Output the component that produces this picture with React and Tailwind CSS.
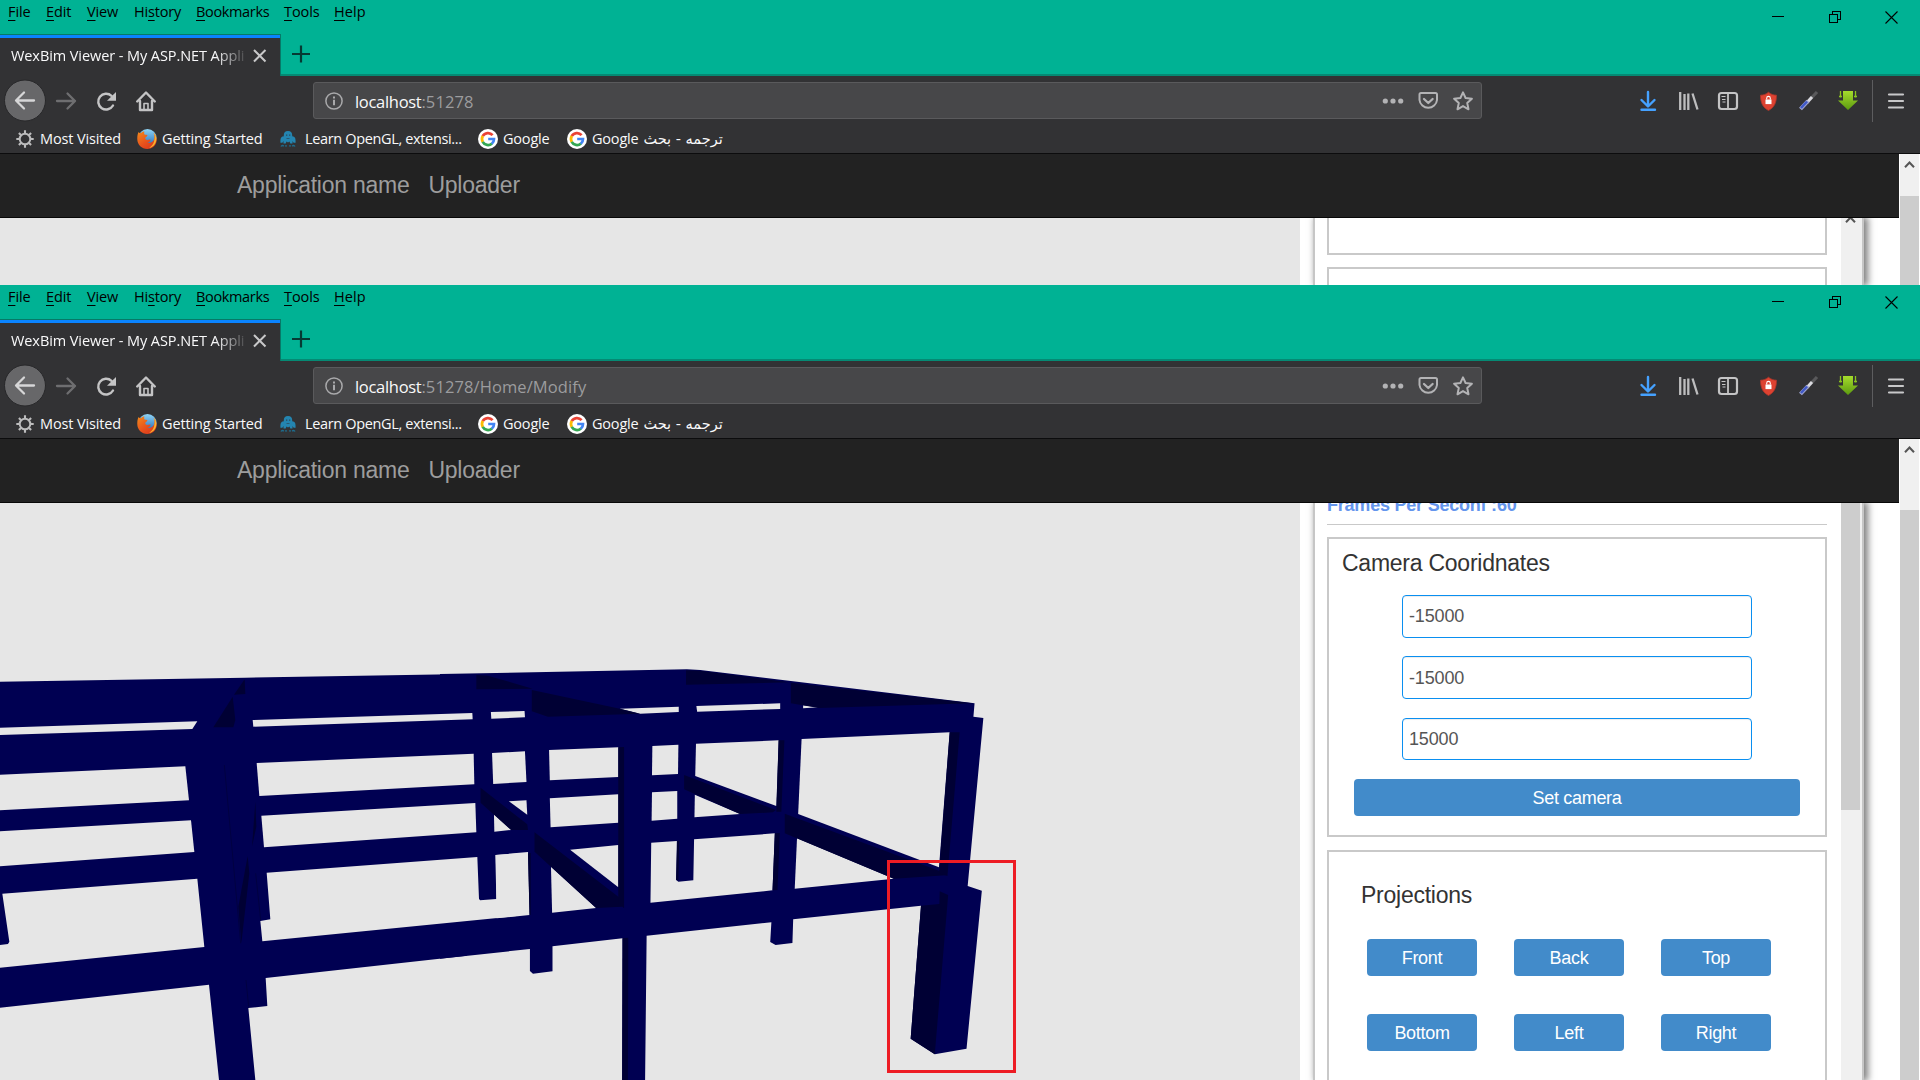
import React from "react";

const UI = "font-['Open_Sans','Noto_Sans',sans-serif]";

function MenuItem({ k, pre = "", rest, className }) {
  return (
    <span className={"block shrink-0 whitespace-nowrap " + className}>
      {pre}
      <span className="underline decoration-1 underline-offset-[3px]">{k}</span>
      {rest}
    </span>
  );
}

function MenuRow() {
  return (
    <div className={"flex h-[34px] items-start justify-between pl-2 text-[#06241f] " + UI}>
      <div className="flex pt-px text-[14.5px] leading-[21px] text-black">
        <MenuItem k="F" rest="ile" className="w-[38px] tracking-[-0.1px]" />
        <MenuItem k="E" rest="dit" className="w-[41px] tracking-[-0.1px]" />
        <MenuItem k="V" rest="iew" className="w-[47px] tracking-[-0.15px]" />
        <MenuItem pre="Hi" k="s" rest="tory" className="w-[62px] tracking-[-0.2px]" />
        <MenuItem k="B" rest="ookmarks" className="w-[88px] tracking-[-0.35px]" />
        <MenuItem k="T" rest="ools" className="w-[50px] tracking-[-0.1px]" />
        <MenuItem k="H" rest="elp" className="w-[36px] tracking-[0.05px]" />
      </div>
      <svg className="h-[34px] w-[160px] shrink-0" viewBox="1760 0 160 34" fill="none" stroke="#000" shapeRendering="crispEdges">
        <path d="M1772 16.5h12" />
        <path d="M1829.5 14.5h8v8h-8zM1832.5 14v-2.500h8v8h-2.500" />
        <path d="M1885.500 11.500l12 12M1897.500 11.500l-12 12" shapeRendering="auto" strokeWidth="1.100" />
      </svg>
    </div>
  );
}

function TabRow() {
  return (
    <div className="flex h-[42px]">
      <div className="flex w-[281px] shrink-0 flex-col border-t border-r border-[#067a68] bg-[#323234]">
        <div className="h-[3px] shrink-0 bg-[#0a84ff]" />
        <div className="flex flex-1 items-center pb-[3px] pl-[11px]">
          <div className="w-[236px] [mask-image:linear-gradient(to_right,#000_204px,transparent_238px)]">
            <span className={"block whitespace-nowrap text-[14.5px] leading-[20px] tracking-[-0.08px] text-[#f9f9fa] " + UI}>
              WexBim Viewer - My ASP.NET Appli
            </span>
          </div>
          <svg className="ml-[5px] h-[16px] w-[16px]" viewBox="0 0 16 16" fill="none" stroke="#c8c8c9" strokeWidth="2">
            <path d="M2 2l11.500 11.500M13.500 2L2 13.500" />
          </svg>
        </div>
      </div>
      <div className="flex flex-1 items-start border-b-2 border-[#058a74] pt-[10px] pl-[10px]">
        <svg className="h-[20px] w-[20px]" viewBox="0 0 20 20" fill="none" stroke="#063a33" strokeWidth="2.200">
          <path d="M1 10h18M10 1.500v17" />
        </svg>
      </div>
    </div>
  );
}

function NavButtons() {
  return (
    <svg className="h-[50px] w-[313px] shrink-0" viewBox="0 76 313 50" fill="none" strokeLinecap="round" strokeLinejoin="round">
      <circle cx="25" cy="100.500" r="20.500" fill="#676769" stroke="#272729" />
      <path d="M34 100.500H16.500M24 92.500l-8 8 8 8" stroke="#d6d6d7" strokeWidth="2.300" />
      <path d="M57 101h18M67.500 93.500l7.500 7.500-7.500 7.500" stroke="#6e6e70" strokeWidth="2.300" />
      <path d="M111.500 95.800A7.900 7.900 0 1 0 113 105.500" stroke="#c4c4c5" strokeWidth="2.400" />
      <path d="M116 92v8.800h-9z" fill="#c4c4c5" />
      <path d="M137.200 101.500l8.800-9 8.800 9M140 101v9h12v-9" stroke="#c4c4c5" strokeWidth="2.400" />
      <path d="M144 110v-6.500h4V110" stroke="#c4c4c5" strokeWidth="1.600" />
    </svg>
  );
}

function UrlBar({ path }) {
  return (
    <div className="mt-[6px] flex h-[37px] w-[1169px] shrink-0 items-center rounded-[3px] border border-[#5a5a5c] bg-[#474749]">
      <svg className="ml-[11px] h-[18px] w-[18px]" viewBox="0 0 18 18" fill="none" stroke="#a9a9ab">
        <circle cx="9" cy="9" r="8.100" strokeWidth="1.500" />
        <path d="M9 7.800v5.400" strokeWidth="2" />
        <path d="M9 4.400v2" strokeWidth="2" />
      </svg>
      <div className={"ml-[12px] flex-1 pt-[2px] whitespace-nowrap text-[16.500px] leading-[22px] tracking-[-0.3px] text-[#f9f9fa] " + UI}>
        localhost<span className="tracking-[0.1px] text-[#9c9c9e]">{path}</span>
      </div>
      <svg className="h-[35px] w-[110px]" viewBox="1371 83 110 35" fill="none" stroke="#b3b3b5" strokeWidth="2" strokeLinejoin="round" strokeLinecap="round">
        <g fill="#b3b3b5" stroke="none">
          <circle cx="1385.300" cy="101" r="2.600" />
          <circle cx="1393" cy="101" r="2.600" />
          <circle cx="1400.700" cy="101" r="2.600" />
        </g>
        <path d="M1421 93h14.500q1.500 0 1.500 1.500v5.500a8.800 8.800 0 0 1-17.500 0v-5.500q0-1.500 1.500-1.500z" />
        <path d="M1424 99l4.300 4 4.300-4" strokeWidth="2.300" />
        <path d="M1463 92.300l2.600 5.700 6.300.7-4.700 4.200 1.300 6.400-5.500-3.200-5.500 3.200 1.300-6.400-4.700-4.200 6.300-.7z" />
      </svg>
    </div>
  );
}

function ToolbarIcons() {
  return (
    <svg className="h-[50px] w-[300px] shrink-0" viewBox="1620 76 300 50" fill="none">
      <defs>
        <linearGradient id="leafGreen" x1="0" y1="0" x2="0" y2="1">
          <stop offset="0" stopColor="#a5dc2c" />
          <stop offset="1" stopColor="#5c9a10" />
        </linearGradient>
      </defs>
      <g stroke="#45a1ff" strokeWidth="2.400" strokeLinecap="round" strokeLinejoin="round">
        <path d="M1648 92v14M1641.500 100l6.500 6.500 6.500-6.500M1641.500 109.800h13.500" />
      </g>
      <path d="M1680.200 92v18M1684.500 94v16M1688.300 93.500v16.500M1692.500 93.500l5 16" stroke="#bdbdbe" strokeWidth="2.300" />
      <rect x="1719" y="93" width="18" height="16" rx="2.500" stroke="#c4c4c5" strokeWidth="2.200" />
      <path d="M1728 93v16" stroke="#c4c4c5" strokeWidth="1.800" />
      <path d="M1721.500 96.500h4M1722 99.500h3.500M1722.500 102h3" stroke="#c4c4c5" strokeWidth="1.200" />
      <path d="M1768.500 92.200c2.400 2 4.600 2.800 8 3 0 7-2 12.300-8 15.300-6-3-8-8.300-8-15.300 3.400-.2 5.600-1 8-3z" fill="#dd4231" stroke="#a93529" strokeWidth=".8" />
      <rect x="1765.500" y="99.500" width="6" height="4.600" fill="#fff" />
      <path d="M1766.700 99.500v-1.300a1.800 1.800 0 0 1 3.600 0v1.300" stroke="#fff" strokeWidth="1.100" />
      <path d="M1817 92l-8 8.500" stroke="#59595b" strokeWidth="3.200" />
      <path d="M1812 97l-5 5.500" stroke="#d9d9df" strokeWidth="3" />
      <path d="M1808 101l-7.500 8" stroke="#9ea4cf" strokeWidth="4" />
      <path d="M1807 101.500l-6 6.500" stroke="#4059c8" strokeWidth="2.500" />
      <path d="M1843 91h10v9.500h5l-10 9.500-10-9.500h5z" fill="url(#leafGreen)" />
      <path d="M1840.500 91v6.500M1855.500 91v6.500M1839 96.500h3M1854 96.500h3" stroke="#8ac41f" strokeWidth="1.300" />
      <path d="M1872.500 80v42" stroke="#5d5d5f" />
      <path d="M1889 94.500h14M1889 101h14M1889 107.500h14" stroke="#c8c8c9" strokeWidth="2.200" strokeLinecap="round" />
    </svg>
  );
}

function Gear() {
  return (
    <svg className="mr-[5px] h-[20px] w-[20px] shrink-0" viewBox="0 0 20 20" fill="none" stroke="#bcbcbd">
      <circle cx="10" cy="10" r="5.300" strokeWidth="2" />
      <path d="M10 1.300v3M10 15.700v3M1.300 10h3M15.700 10h3M3.900 3.900l2 2M14.100 14.100l2 2M3.900 16.100l2-2M14.100 5.900l2-2" strokeWidth="2.100" />
    </svg>
  );
}

function Firefox() {
  return (
    <svg className="mr-[5px] h-[20px] w-[20px] shrink-0" viewBox="0 0 20 20">
      <defs>
        <linearGradient id="foxFire" x1="0" y1="0" x2=".8" y2="1">
          <stop offset="0" stopColor="#f28a1c" />
          <stop offset=".6" stopColor="#e8501c" />
          <stop offset="1" stopColor="#d9381c" />
        </linearGradient>
        <linearGradient id="foxSky" x1="0" y1="0" x2="0" y2="1">
          <stop offset="0" stopColor="#8fd4f5" />
          <stop offset="1" stopColor="#1762b5" />
        </linearGradient>
      </defs>
      <circle cx="10.500" cy="9.300" r="9.200" fill="url(#foxSky)" />
      <path d="M1.500 3c.6 1 1.600 1 2.600.9C5.200 3 6.500 2.500 7.500 2.600 7 3.500 7 4.500 7.500 5.400c1.200.3 2.500.4 3 .8-.3 1.300-1.600 1.900-2.300 2.700.2 1.300.8 1.900 2 2.100 1.200.1 2-.6 3.300-.3 0 1.700-1.600 2.800-3.500 2.900 3.500 1.200 7-.8 7.400-4.600.3-2 0-3.500-.8-5 2.500 2.200 3.600 5.500 2.900 8.800C18.500 17 14.800 20 10.300 20 4.800 20 .3 15.800.3 10.300.2 7.500.6 5 1.500 3z" fill="url(#foxFire)" />
      <path d="M19.200 8c.8 5-2 10-7 11 3.500-2.500 5-5 5.300-9 .5-2.500.2-4-.8-6 1.500 1 2.200 2.500 2.500 4z" fill="#f9b52c" />
    </svg>
  );
}

function Octopus() {
  return (
    <svg className="mr-[9px] h-[18px] w-[16px] shrink-0" viewBox="0 0 16 18" fill="#2485b0">
      <path d="M8 1C5 1 3.600 3 3.800 5.500c.1 1-.8 1-1.800 1.200C.8 7.200.3 9 .4 12.800h2L3.500 11v2.500h2.200l.8-2 1.500 1 1.500-1 .8 2h2.200V11l1.100 1.800h2c.1-3.800-.4-5.600-1.600-6.100-1-.2-1.900-.2-1.800-1.200C12.400 3 11 1 8 1z" />
      <path d="M6 4.500h1.300v1.200H6zM9 4.500h1.300v1.200H9zM6.500 8h3v.8h-3z" fill="#2c4a5c" />
      <path d="M1 16.500c.8-1.300 2-1.300 2.800-.3M6 16.800V15M10 15v1.800M12.200 16.200c.8-1 2-1 2.800.3" fill="none" stroke="#1e6c8d" strokeWidth="1.400" />
    </svg>
  );
}

function Google() {
  return (
    <svg className="mr-[5px] h-[20px] w-[20px] shrink-0" viewBox="0 0 20 20" fill="none" strokeWidth="2.700">
      <circle cx="10" cy="10" r="10" fill="#fff" />
      <path d="M14.600 6.200A6 6 0 0 0 4.700 7.200" stroke="#ea4335" />
      <path d="M4.800 7A6 6 0 0 0 4.800 13" stroke="#fbbc05" />
      <path d="M4.700 12.800A6 6 0 0 0 14 14.500" stroke="#34a853" />
      <path d="M10.200 10H16a6 6 0 0 1-2.200 4.700" stroke="#4285f4" />
    </svg>
  );
}

function Bookmarks() {
  return (
    <div className={"flex h-[27px] items-center pl-[15px] pb-[2px] text-[14.5px] leading-[20px] tracking-[-0.13px] whitespace-nowrap text-[#f9f9fa] " + UI}>
      <div className="flex w-[122px] items-center"><Gear />Most Visited</div>
      <div className="flex w-[143px] items-center"><Firefox />Getting Started</div>
      <div className="flex w-[198px] items-center tracking-[-0.35px]"><Octopus />Learn OpenGL, extensi...</div>
      <div className="flex w-[89px] items-center tracking-[-0.2px]"><Google />Google</div>
      <div className="flex items-center tracking-[-0.2px]">
        <Google />
        <span>Google</span>
        <span dir="rtl" className="ml-[5px] pt-px text-[14.5px] tracking-normal font-['DejaVu_Sans',sans-serif]">ترجمه - بحث</span>
      </div>
    </div>
  );
}

function Chevron({ className }) {
  return (
    <svg className={"h-[7px] w-[11px] " + className} viewBox="0 0 11 7" fill="none" stroke="#555" strokeWidth="2">
      <path d="M1 6.200l4.500-4.700L10 6.200" />
    </svg>
  );
}

function Browser({ path, height, thumb, children }) {
  return (
    <section className={"flex w-[1920px] shrink-0 flex-col overflow-hidden bg-[#00b294] " + height}>
      <MenuRow />
      <TabRow />
      <div className="h-[78px] shrink-0 border-b border-[#0c0c0d] bg-[#323234]">
        <div className="flex h-[50px] justify-between">
          <NavButtons />
          <UrlBar path={path} />
          <div className="flex-1" />
          <ToolbarIcons />
        </div>
        <Bookmarks />
      </div>
      <div className="flex min-h-0 flex-1 bg-white">
        <div className="flex w-[1899px] shrink-0 flex-col">
          <nav className="flex h-[64px] shrink-0 items-center gap-[19px] border-b border-[#080808] bg-[#222] pb-px pl-[237px] font-['Liberation_Sans',sans-serif] text-[23px] leading-[30px] tracking-[-0.25px] text-[#9d9d9d]">
            <span>Application name</span>
            <span>Uploader</span>
          </nav>
          {children}
        </div>
        <div className="ml-px flex w-[19px] flex-col bg-[#f0f0f0]">
          <Chevron className="mt-[7px] ml-[4px] shrink-0" />
          <div className={"flex-1 bg-[#cdcdcd] " + thumb} />
        </div>
      </div>
    </section>
  );
}

function Workspace({ scene, scrollbar, children }) {
  return (
    <div className="flex min-h-0 flex-1 overflow-hidden bg-white">
      <div className="w-[1300px] shrink-0 overflow-hidden bg-[#e6e6e6]">{scene}</div>
      <div className="ml-[13px] flex w-[551px] shrink-0 border-x-2 border-[#c6c6c6] bg-white shadow-[3px_0_7px_1px_rgba(0,0,0,0.5)]">
        <div className="w-[526px] shrink-0 overflow-hidden pl-3">{children}</div>
        {scrollbar}
      </div>
    </div>
  );
}

const NAVY = "#000052";
const SHADE = "#000034";
const SKY = "#e6e6e6";

const leftGaps = [
  "0,263 592,244 577,267 0,285",
  "758,240 1417,219 1418,238 760,260",
  "0,404 556,379 567,481 0,511",
  "0,574 573,541 583,636 0,679",
  "7,761 592,716 613,921 0,983 0,915 24,912 28,905",
  "770,369 1421,341 1423,433 778,468",
  "784,527 1426,489 1429,577 792,622",
  "800,698 1432,651 1437,776 1440,781 1489,777 1486,645 1560,640 1560,827 787,904 781,843 811,838",
];

const leftShades = [
  "734,118 736,162 702,164",
  "698,170 706,240 700,262 640,262",
  "766,485 769,560 756,620",
  "743,648 748,700 724,910 715,800",
];

const rightGaps = [
  "133,216 221,213 222,232 134,236",
  "470,206 624,200 624,216 523,221",
  "670,198 889,190 889,207 672,215",
  "949,196 988,202 949,205",
  "136,339 222,334 226,426 139,432",
  "285,330 466,322 466,411 287,421",
  "555,318 623,314 622,402 554,406",
  "669,311 885,301 879,498 667,408",
  "945,297 1332,277 1304,682 936,522",
  "180,484 226,481 228,524",
  "141,523 186,570 142,575",
  "287,475 466,463 466,548 289,562",
  "554,457 620,453 620,536 553,542",
  "666,464 784,522 665,532",
  "340,629 466,615 466,742",
  "290,680 408,804 293,818",
  "146,645 230,636 234,825 148,835",
  "552,608 619,603 617,720 623,725 662,721 664,598 875,580 869,751 550,788",
  "933,595 1186,716 927,746",
];

const rightShades = [
  "95,105 125,107 242,146 95,148",
  "240,150 470,206 523,221 282,230 240,214",
  "643,91 680,92 912,127 643,134",
  "917,128 1392,190 990,204 917,190",
  "106,443 228,553 230,570 186,570 106,488",
  "247,577 466,770 480,790 475,800 408,804 247,635",
  "638,405 878,510 870,517 784,522 638,448",
  "901,521 1304,692 1322,706 1186,716 901,580",
  "466,322 481,321 481,805 466,790",
  "477,895 492,893 491,1320 476,1320",
  "885,301 900,301 892,515 879,515",
  "875,580 888,579 882,750 869,751",
  "1332,277 1358,277 1326,708 1304,700",
  "1306,754 1328,765 1293,1243 1230,1196 1257,797 1305,792",
  "230,640 237,639 237,825 234,825",
  "620,603 625,603 623,720 617,720",
];

function Polys({ list, fill }) {
  return list.map((p) => <polygon key={p} points={p} fill={fill} />);
}

function Model() {
  const L = "translate(0 640) scale(0.33333)";
  const R = "translate(440 640) scale(0.38265 0.33333)";
  return (
    <svg className="block h-[577px] w-[1300px]" viewBox="0 503 1300 577">
      <g fill={NAVY}>
        <polygon transform={L} points="0,125 735,113 1400,102 1400,947 797,1014 802,1098 745,1104 766,1320 657,1320 627,1034 0,1103" />
        <polygon
          transform={R}
          points="0,102 645,88 680,90 1397,190 1394,230 1420,234 1379,738 1416,752 1376,1226 1293,1243 1230,1196 1257,797 923,838 921,909 877,915 863,906 866,847 540,887 536,1320 476,1320 477,895 294,919 294,994 243,1001 235,993 235,927 0,956"
        />
      </g>
      <g transform={L}>
        <Polys list={leftGaps} fill={SKY} />
        <Polys list={leftShades} fill={SHADE} />
        <path d="M673 375L722 910M738 1020L746 1100M767 700L782 840" fill="none" stroke="#000041" strokeWidth="3" />
      </g>
      <g transform={R}>
        <Polys list={rightGaps} fill={SKY} />
        <Polys list={rightShades} fill={SHADE} />
      </g>
      <rect x="888.500" y="861.500" width="126" height="210" fill="none" stroke="#ed1c24" strokeWidth="3" />
    </svg>
  );
}

const BTN = "flex h-[37px] items-center justify-center rounded-[4px] bg-[#428bca] text-[18px] leading-[24px] tracking-[-0.3px] text-white";

function Field({ value, className }) {
  return (
    <div className={"flex items-center rounded-[4px] border border-[#0a8ff0] bg-white pl-[6px] text-[18px] tracking-[-0.15px] text-[#555] shadow-[inset_0_1px_1px_rgba(0,0,0,0.075)] " + className}>
      {value}
    </div>
  );
}

export default function App() {
  return (
    <main className="flex h-[1080px] w-[1920px] flex-col overflow-hidden bg-white">
      <Browser path=":51278" height="h-[285px]" thumb="mt-[28px]">
        <Workspace
          scrollbar={
            <div className="w-[21px] shrink-0 overflow-hidden bg-[#f0f0f0]">
              <Chevron className="-mt-[2px] ml-[4px]" />
            </div>
          }
        >
          <div className="h-[37px] w-[500px] border-2 border-t-0 border-[#c9c9c9]" />
          <div className="mt-[12px] h-[40px] w-[500px] border-2 border-[#c9c9c9]" />
        </Workspace>
      </Browser>
      <Browser path=":51278/Home/Modify" height="h-[795px]" thumb="mt-[57px]">
        <Workspace
          scene={<Model />}
          scrollbar={
            <div className="w-[21px] shrink-0 bg-[#f0f0f0]">
              <div className="h-[307px] w-[19px] bg-[#cdcdcd]" />
            </div>
          }
        >
          <div className="flex flex-col font-['Liberation_Sans',sans-serif]">
            <div className="h-[22px] w-[500px] overflow-hidden border-b border-[#c9c9c9]">
              <div className="-mt-[10px] text-[18px] leading-[24px] font-bold tracking-[-0.22px] text-[#6495ed]">Frames Per Seconf :60</div>
            </div>
            <div className="mt-[12px] h-[300px] w-[500px] border-2 border-[#c9c9c9] px-[13px] pt-[9px]">
              <h3 className="-mt-px mb-px text-[23px] leading-[32px] tracking-[-0.25px] text-[#333]">Camera Cooridnates</h3>
              <div className="flex flex-col pl-[60px] pt-[15px]">
                <Field value="-15000" className="h-[43px] w-[350px]" />
                <Field value="-15000" className="mt-[18px] h-[43px] w-[350px] pt-px" />
                <Field value="15000" className="mt-[19px] h-[42px] w-[350px]" />
              </div>
              <div className={"mt-[19px] ml-[12px] w-[446px] " + BTN}>Set camera</div>
            </div>
            <div className="mt-[13px] h-[300px] w-[500px] shrink-0 border-2 border-[#c9c9c9] pt-[27px] pl-[32px]">
              <h3 className="text-[23px] leading-[32px] tracking-[-0.25px] text-[#333]">Projections</h3>
              <div className="mt-[28px] ml-[6px] grid grid-cols-[110px_110px_110px] gap-x-[37px] gap-y-[38px]">
                {["Front", "Back", "Top", "Bottom", "Left", "Right"].map((t) => (
                  <div key={t} className={BTN}>{t}</div>
                ))}
              </div>
            </div>
          </div>
        </Workspace>
      </Browser>
    </main>
  );
}
